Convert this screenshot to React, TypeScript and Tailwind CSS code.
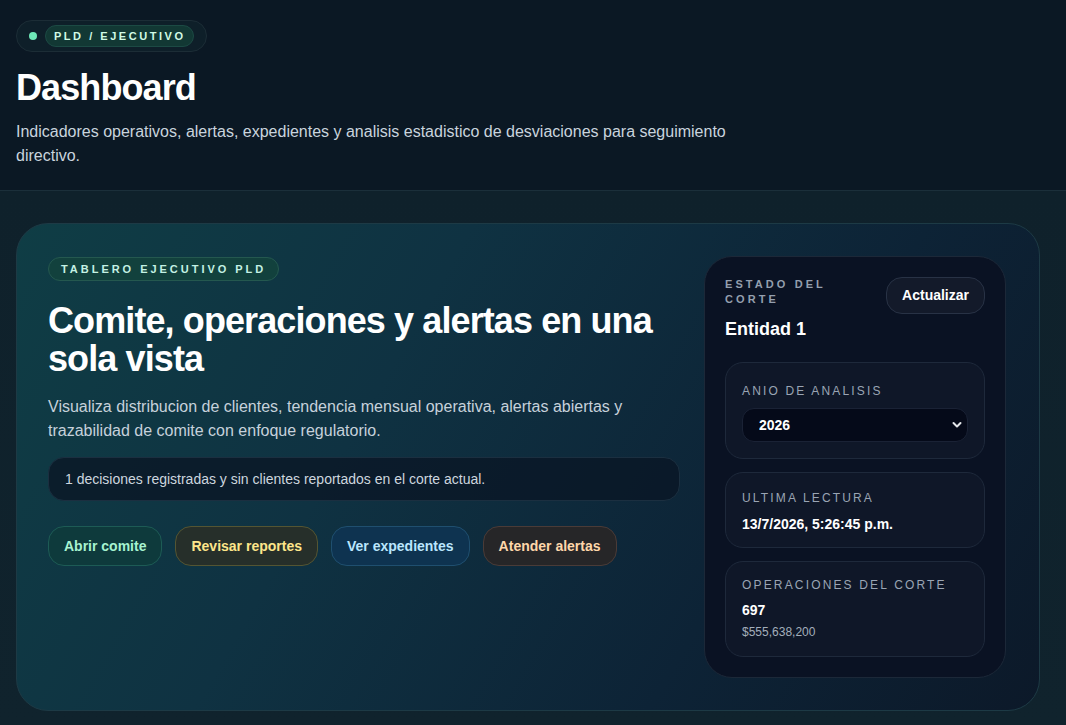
import React, { useState } from 'react';

const actions = [
  { label: 'Abrir comite', cls: 'bg-[#0e3a3c] border-[#1d5b55] text-[#a7f3d0]' },
  { label: 'Revisar reportes', cls: 'bg-[#262f2a] border-[#545532] text-[#fde68a]' },
  { label: 'Ver expedientes', cls: 'bg-[#0e3350] border-[#1f4f6f] text-[#bae6fd]' },
  { label: 'Atender alertas', cls: 'bg-[#262628] border-[#4a3b37] text-[#fed7aa]' },
];

export default function App() {
  const [year, setYear] = useState('2026');
  return (
    <div className="min-h-[725px] bg-[#10212b] font-['Liberation_Sans',Arial,sans-serif] text-white">
      <header className="bg-[#0b1824] border-b border-[#1b2f3a] px-4 pt-5 pb-[22px]">
        <div className="inline-flex items-center gap-[8px] rounded-full border border-[#1c2d36] bg-[#0e1f29] px-[12px] py-[4px]">
          <span className="h-[8px] w-[8px] rounded-full bg-[#6ee7b7]" />
          <span className="rounded-full border border-[#1c4a44] bg-[#123834] px-[8px] py-[3px] text-[11px] font-bold leading-[14px] tracking-[0.23em] text-[#d1fae5]">PLD / EJECUTIVO</span>
        </div>
        <h1 className="mt-[16px] text-[36px] font-bold leading-[40px] tracking-tight">Dashboard</h1>
        <p className="mt-[12px] max-w-[730px] text-[16px] leading-[24px] text-[#c9d4de]">
          Indicadores operativos, alertas, expedientes y analisis estadistico de desviaciones para seguimiento directivo.
        </p>
      </header>

      <main className="pl-4 pr-[26px] pt-8 pb-4 bg-[linear-gradient(180deg,#0f212b_0%,#10232d_100%)]">
        <section className="grid grid-cols-[1fr_302px] gap-6 rounded-[32px] border border-[#1d3a45] bg-[linear-gradient(120deg,#0f3d45_0%,#0f3242_35%,#0d2336_70%,#0c1929_100%)] pt-8 pb-8 pl-[31px] pr-[33px]">
          <div>
            <span className="inline-block rounded-full border border-[#24584f] bg-[#12413d] px-[12px] py-[4px] text-[11px] font-bold leading-[14px] tracking-[0.27em] text-[#c4f1e4]">TABLERO EJECUTIVO PLD</span>
            <h2 className="mt-[21px] text-[36px] font-bold leading-[38px] tracking-tight">Comite, operaciones y alertas en una sola vista</h2>
            <p className="mt-[17px] text-[16px] leading-[24px] text-[#c6d1db]">
              Visualiza distribucion de clientes, tendencia mensual operativa, alertas abiertas y trazabilidad de comite con enfoque regulatorio.
            </p>
            <div className="mt-[14px] rounded-[16px] border border-[#1b2f40] bg-[#0a1626]/80 px-[16px] py-[12px] text-[14px] leading-[18px] text-[#cdd6df]">
              1 decisiones registradas y sin clientes reportados en el corte actual.
            </div>
            <div className="mt-[25px] flex gap-[13px]">
              {actions.map((a) => (
                <button key={a.label} className={`h-[40px] rounded-[16px] border px-[15px] text-[14px] font-bold ${a.cls}`}>{a.label}</button>
              ))}
            </div>
          </div>

          <aside className="rounded-[28px] border border-[#1c2838] bg-[#0a1223] p-5 pb-[20px]">
            <div className="flex items-start justify-between">
              <div>
                <p className="w-[110px] text-[11px] font-bold leading-[15px] tracking-[0.28em] text-[#949fae]">ESTADO DEL CORTE</p>
                <p className="mt-[11px] text-[18px] font-bold leading-[22px]">Entidad 1</p>
              </div>
              <button className="h-[37px] rounded-[16px] border border-[#283245] bg-[#131a2a] px-[15px] text-[14px] font-bold">Actualizar</button>
            </div>

            <div className="mt-[22px] flex flex-col gap-[13px]">
              <div className="rounded-[18px] border border-[#1e293b] bg-[#0f1728] px-4 pt-[21px] pb-[16px]">
                <p className="text-[12px] leading-[15px] tracking-[0.18em] text-[#9aa5b4]">ANIO DE ANALISIS</p>
                <div className="relative mt-[9px]">
                  <select
                    value={year}
                    onChange={(e) => setYear(e.target.value)}
                    className="h-[34px] w-full appearance-none rounded-[12px] border border-[#1a2235] bg-[#050a19] px-[16px] text-[14px] font-bold text-white outline-none"
                  >
                    <option value="2026">2026</option>
                    <option value="2025">2025</option>
                    <option value="2024">2024</option>
                  </select>
                  <svg className="pointer-events-none absolute right-[6px] top-[13px]" width="10" height="8" viewBox="0 0 10 8" fill="none">
                    <path d="M1.5 2l3.5 3.5L8.5 2" stroke="#e5e7eb" strokeWidth="2" strokeLinecap="round" strokeLinejoin="round" />
                  </svg>
                </div>
              </div>

              <div className="rounded-[18px] border border-[#1e293b] bg-[#0f1728] px-4 pt-[18px] pb-[14px]">
                <p className="text-[12px] leading-[15px] tracking-[0.18em] text-[#9aa5b4]">ULTIMA LECTURA</p>
                <p className="mt-[10px] text-[14px] font-bold leading-[17px]">13/7/2026, 5:26:45 p.m.</p>
              </div>

              <div className="rounded-[18px] border border-[#1e293b] bg-[#0f1728] px-4 pt-[16px] pb-[16px]">
                <p className="text-[12px] leading-[15px] tracking-[0.18em] text-[#9aa5b4]">OPERACIONES DEL CORTE</p>
                <p className="mt-[9px] text-[14px] font-bold leading-[17px]">697</p>
                <p className="mt-[6px] text-[12px] leading-[15px] text-[#a3aebb]">$555,638,200</p>
              </div>
            </div>
          </aside>
        </section>
      </main>
    </div>
  );
}
